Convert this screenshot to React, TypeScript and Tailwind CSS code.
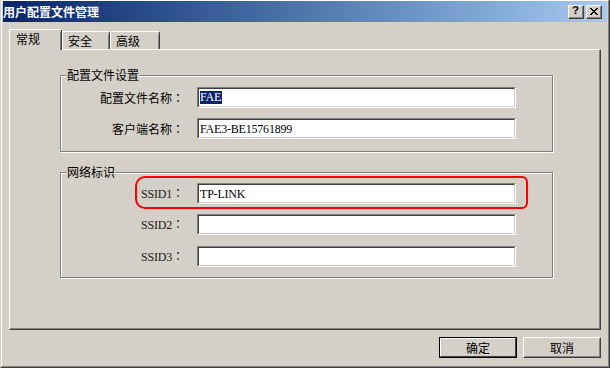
import React from 'react';

const cjk = "font-['Noto_Sans_CJK_SC',sans-serif]";
const mono = "font-['Liberation_Serif','Noto_Sans_CJK_SC',serif] text-[12px] tracking-[-0.2px]";

function Colon() {
  return <span className="font-['Noto_Sans_CJK_TC',sans-serif]">：</span>;
}

function Field({ children }: { children?: React.ReactNode }) {
  return (
    <div className="w-[319px] h-[21px] border border-t-[#808080] border-l-[#808080] border-r-white border-b-white">
      <div className={`h-full bg-white border border-t-[#404040] border-l-[#404040] border-r-[#d4d0c8] border-b-[#d4d0c8] flex items-center pl-px ${mono} text-black`}>
        {children}
      </div>
    </div>
  );
}

function Row({ label, children, className = '' }: { label: React.ReactNode; children?: React.ReactNode; className?: string }) {
  return (
    <div className={`flex items-center ${className}`}>
      <div className={`w-[123px] text-right text-[12px] leading-none text-black ${cjk}`}>{label}</div>
      <div className="ml-[13px]">
        <Field>{children}</Field>
      </div>
    </div>
  );
}

function Group({ title, className = '', children }: { title: string; className?: string; children: React.ReactNode }) {
  return (
    <div className={`relative w-[493px] ml-[50px] border border-[#808080] shadow-[inset_1px_1px_0_#fff,1px_1px_0_#fff] ${className}`}>
      <div className={`absolute left-[5px] -top-[9px] px-px bg-[#d4d0c8] text-[12px] leading-[16px] text-black ${cjk}`}>{title}</div>
      {children}
    </div>
  );
}

function SsidLabel({ n }: { n: number }) {
  return (
    <span className="text-[#202020]">
      <span className={mono}>SSID{n}</span>
      <Colon />
    </span>
  );
}

function Tab({ label, active, w }: { label: string; active?: boolean; w: string }) {
  return (
    <div
      className={`${w} ${active ? 'h-[21px] -mb-px z-10 pl-[6px]' : 'h-[18px] pl-[5px]'} relative bg-[#d4d0c8] rounded-t-[2px] border-t border-l border-white border-r border-r-[#404040] flex items-center text-[12px] text-black ${cjk}`}
    >
      <span className={active ? '-mt-[2px]' : ''}>{label}</span>
      <div className="absolute right-0 top-[2px] bottom-0 w-px bg-[#808080]" />
    </div>
  );
}

function CapButton({ children }: { children: React.ReactNode }) {
  return (
    <div className="w-[16px] h-[14px] bg-[#d4d0c8] border border-t-white border-l-white border-r-[#404040] border-b-[#404040]">
      <div className="w-full h-full border-r border-b border-[#808080] flex items-center justify-center">{children}</div>
    </div>
  );
}

function Button({ label, primary }: { label: string; primary?: boolean }) {
  return (
    <div
      className={`w-[78px] h-[21px] ${primary ? 'border border-black' : 'border border-t-white border-l-white border-r-[#404040] border-b-[#404040]'}`}
    >
      <div
        className={`h-full flex items-center justify-center text-[12px] text-black ${cjk} ${primary ? 'border border-t-white border-l-white border-r-[#404040] border-b-[#404040]' : 'border border-t-[#d4d0c8] border-l-[#d4d0c8] border-r-[#808080] border-b-[#808080]'}`}
      >
        {label}
      </div>
    </div>
  );
}

export default function App() {
  return (
    <div className="w-[610px] h-[368px] bg-[#d4d0c8] border-l border-l-[#d4d0c8] border-r border-b border-r-[#404040] border-b-[#404040]">
      <div className="h-full flex flex-col border-l border-t border-white border-r border-b border-r-[#808080] border-b-[#808080] px-px">
        {/* title bar */}
        <div className="h-[21px] bg-linear-to-r from-[#0a246a] to-[#a6caf0] flex items-center justify-between pr-[5px]">
          <span className={`text-white font-bold text-[12px] leading-none ${cjk}`}>用户配置文件管理</span>
          <div className="flex gap-[2px]">
            <CapButton>
              <span className="font-['Liberation_Sans',sans-serif] font-bold text-[11px] leading-none text-black -mt-px">?</span>
            </CapButton>
            <CapButton>
              <svg width="8" height="7" viewBox="0 0 8 7" shapeRendering="crispEdges">
                <path d="M0 0h2v1h-2zM6 0h2v1h-2zM1 1h2v1h-2zM5 1h2v1h-2zM2 2h4v1h-4zM3 3h2v1h-2zM2 4h4v1h-4zM1 5h2v1h-2zM5 5h2v1h-2zM0 6h2v1h-2zM6 6h2v1h-2z" fill="#000" />
              </svg>
            </CapButton>
          </div>
        </div>

        {/* tabs */}
        <div className="mt-[7px] px-[6px] flex items-end h-[20px]">
          <Tab label="常规" active w="w-[53px]" />
          <Tab label="安全" w="w-[48px]" />
          <Tab label="高级" w="w-[50px]" />
        </div>

        {/* tab panel */}
        <div className="mx-[6px] h-[281px] border-l border-t border-white border-r border-b border-r-[#404040] border-b-[#404040]">
          <div className="h-full border-r border-b border-[#808080] pt-[25px]">
            <Group title="配置文件设置" className="h-[77px] pt-[11px]">
              <Row label={<>配置文件名称<Colon /></>}>
                <span className="bg-[#0a246a] text-white pr-px leading-[13px]">FAE</span>
              </Row>
              <Row label={<>客户端名称<Colon /></>} className="mt-[10px]">
                FAE3-BE15761899
              </Row>
            </Group>

            <Group title="网络标识" className="h-[106px] pt-[10px] mt-[20px]">
              <Row label={<SsidLabel n={1} />}>TP-LINK</Row>
              <Row label={<SsidLabel n={2} />} className="mt-[10px]" />
              <Row label={<SsidLabel n={3} />} className="mt-[11px]" />
              <div className="absolute left-[74px] top-[3px] w-[393px] h-[33px] border-2 border-[#ff0000] rounded-l-[10px] rounded-r-[6px]" />
            </Group>
          </div>
        </div>

        {/* buttons */}
        <div className="mt-[7px] pr-[6px] flex justify-end gap-[6px]">
          <Button label="确定" primary />
          <Button label="取消" />
        </div>
      </div>
    </div>
  );
}
